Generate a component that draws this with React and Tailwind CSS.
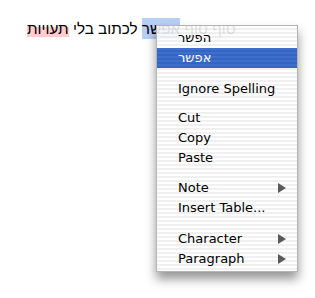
import React from 'react';

const Arrow = () => (
  <svg width="8" height="10" viewBox="0 0 8 10" className="mr-[11px]">
    <path d="M0 0 L8 5 L0 10 Z" fill="#5a5a5a" />
  </svg>
);

const Item = ({ label, sub, active, rtl }) => (
  <div
    className={
      'flex h-[20px] items-center justify-between pl-[21px] ' +
      (active
        ? 'bg-[repeating-linear-gradient(to_bottom,#3d6fcb_0px,#3d6fcb_2px,#3565c2_2px,#3565c2_4px)] text-white'
        : 'text-black')
    }
  >
    <span dir={rtl ? 'rtl' : undefined}>{label}</span>
    {sub && <Arrow />}
  </div>
);

const Sep = ({ h }) => <div className={h} />;

const App = () => {
  return (
    <div className="relative h-[298px] w-[315px] overflow-hidden bg-white font-['Liberation_Sans',sans-serif]">
      <div className="pl-[27px] pt-[17px]">
        <div dir="rtl" className="inline-block text-[15.3px] leading-[21px] text-black">
          סוף סוף <span className="inline-block bg-[#b6cff4] leading-[21px]">אפשר</span> לכתוב בלי{' '}
          <span className="bg-[linear-gradient(#ffcdcd,#ffcdcd)] bg-[length:100%_11px] bg-[position:0_7px] bg-no-repeat">
            תעויות
          </span>
        </div>
      </div>

      <div className="absolute left-[156px] top-[25px] h-[247px] w-[142px] border border-[#b4b4b4] bg-[repeating-linear-gradient(to_bottom,rgba(255,255,255,0.87)_0px,rgba(255,255,255,0.87)_2px,rgba(238,238,238,0.9)_2px,rgba(238,238,238,0.9)_4px)] pt-[2px] font-['DejaVu_Sans',sans-serif] text-[13px] shadow-[0_7px_10px_rgba(0,0,0,0.42)]">
        <Item label="הפשר" rtl />
        <Item label="אפשר" rtl active />
        <Sep h="h-[11px]" />
        <Item label="Ignore Spelling" />
        <Sep h="h-[9px]" />
        <Item label="Cut" />
        <Item label="Copy" />
        <Item label="Paste" />
        <Sep h="h-[10px]" />
        <Item label="Note" sub />
        <Item label="Insert Table..." />
        <Sep h="h-[11px]" />
        <Item label="Character" sub />
        <Item label="Paragraph" sub />
      </div>
    </div>
  );
};

export default App;
